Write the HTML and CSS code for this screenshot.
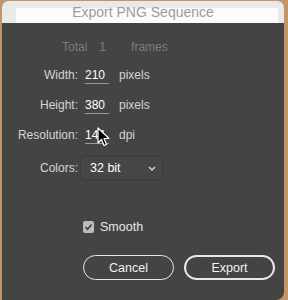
FILE: index.html
```html
<!DOCTYPE html>
<html lang="en">
<head>
    <meta charset="UTF-8">
    <meta name="viewport" content="width=device-width, initial-scale=1.0">
    <title>Export PNG Sequence</title>
    <link rel="stylesheet" href="styles.css">
</head>
<body>
    <div class="window">
        <div class="titlebar">Export PNG Sequence</div>
        <div class="content">
            <div class="row total">
                <span>Total</span>
                <span class="count">1</span>
                <span class="frames">frames</span>
            </div>
            <div class="row">
                <span class="label">Width:</span>
                <span class="value">210</span>
                <span class="unit">pixels</span>
            </div>
            <div class="row">
                <span class="label">Height:</span>
                <span class="value">380</span>
                <span class="unit">pixels</span>
            </div>
            <div class="row">
                <span class="label">Resolution:</span>
                <span class="value">144</span>
                <span class="unit">dpi</span>
                <!-- mouse pointer over the field -->
                <svg class="cursor" width="14" height="20" viewBox="0 0 14 20">
                    <path d="M1 1 L1 16 L4.5 12.5 L7 18.5 L9.5 17.5 L7 11.5 L12 11.5 Z" fill="#000" stroke="#fff" stroke-width="1.2" stroke-linejoin="round"/>
                </svg>
            </div>
            <div class="row colors">
                <span class="label">Colors:</span>
                <div class="select">
                    <span>32 bit</span>
                    <svg width="8" height="5" viewBox="0 0 8 5">
                        <path d="M1 1 L4 4 L7 1" fill="none" stroke="#ddd" stroke-width="1.3"/>
                    </svg>
                </div>
            </div>
            <div class="check-row">
                <span class="checkbox">
                    <svg width="9" height="8" viewBox="0 0 9 8">
                        <path d="M1.5 4 L3.5 6.2 L7.5 1.5" fill="none" stroke="#3d3d3d" stroke-width="1.6"/>
                    </svg>
                </span>
                <span>Smooth</span>
            </div>
            <div class="buttons">
                <button class="btn">Cancel</button>
                <button class="btn primary">Export</button>
            </div>
        </div>
    </div>
</body>
</html>
```

FILE: styles.css
```css
body {
    margin: 0;
    background-color: #c4956a;
    font-family: 'Liberation Sans', Arial, sans-serif;
    font-size: 12px;
    overflow: hidden;
}
.window {
    margin: 1px 4px 0 2px;
    height: 299px;
    background-color: #444444;
    border-radius: 6px 6px 8px 0;
    overflow: hidden;
}
.titlebar {
    height: 22px;
    line-height: 23px;
    text-align: center;
    font-size: 14px;
    color: #9b9b9b;
    background: linear-gradient(#fbfbfb, #fbfbfb) 14px 7px / 262px 15px no-repeat, #e9e9e9;
}
.content {
    display: flex;
    flex-direction: column;
    padding-top: 14px;
}
.row {
    position: relative;
    display: flex;
    align-items: center;
    height: 20px;
    margin-bottom: 10px;
    color: #d4d4d4;
}
.row.total {
    color: #7c7c7c;
    padding-left: 60px;
    margin-bottom: 8px;
}
.total .count {
    margin-left: 12px;
}
.total .frames {
    margin-left: 25px;
}
.label {
    width: 76px;
    text-align: right;
}
.value {
    width: 24px;
    margin-left: 7px;
    color: #ffffff;
    border-bottom: 1px solid #9a9a9a;
    line-height: 15px;
    margin-top: 2px;
}
.unit {
    margin-left: 10px;
}
.cursor {
    position: absolute;
    left: 95px;
    top: 2px;
}
.row.colors {
    height: 24px;
    margin-top: 1px;
}
.select {
    display: flex;
    align-items: center;
    justify-content: space-between;
    width: 66px;
    height: 22px;
    margin-left: 2px;
    padding: 0 6px 0 9px;
    border: 1px solid #3a3a3a;
    border-radius: 3px;
    background-color: #464646;
    color: #ffffff;
    font-size: 12.5px;
}
.check-row {
    display: flex;
    align-items: center;
    gap: 6px;
    margin: 30px 0 0 81px;
    color: #e6e6e6;
    font-size: 12.5px;
}
.checkbox {
    display: flex;
    align-items: center;
    justify-content: center;
    width: 11px;
    height: 12px;
    border-radius: 2px;
    background-color: #bcbcbc;
}
.buttons {
    display: flex;
    gap: 10px;
    margin: 21px 0 0 81px;
}
.btn {
    width: 91px;
    height: 25px;
    border: 1.5px solid #e8e8e8;
    border-radius: 13px;
    background: transparent;
    color: #f2f2f2;
    font-family: inherit;
    font-size: 12.5px;
    padding: 0;
}
.btn.primary {
    border-width: 2px;
}
```
